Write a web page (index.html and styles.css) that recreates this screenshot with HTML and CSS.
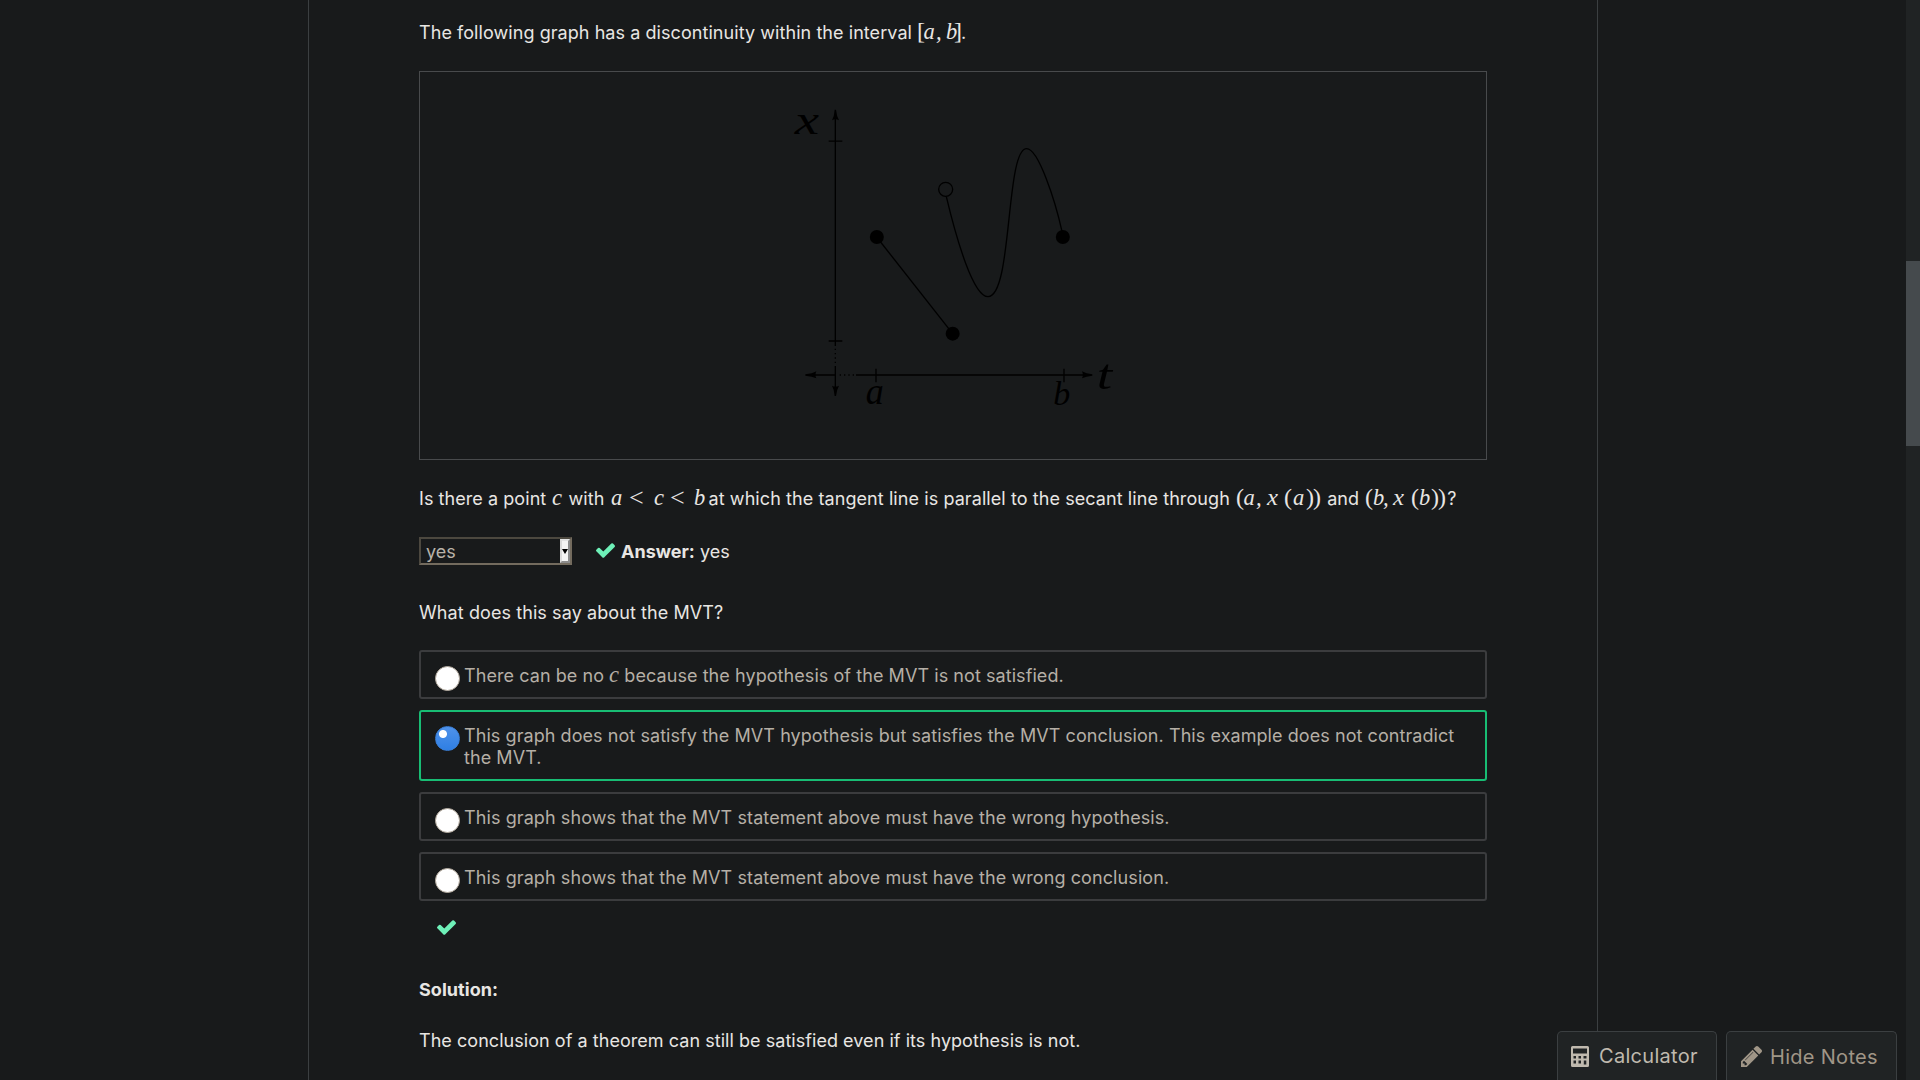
FILE: index.html
```html
<!DOCTYPE html>
<html lang="en">
<head>
<meta charset="utf-8">
<title>Mean Value Theorem</title>
<link rel="stylesheet" href="styles.css">
</head>
<body>
<div class="viewport">
  <main class="column">
    <p class="para intro">The following graph has a discontinuity within the interval <svg class="math" width="43" height="28"><text class="fence" x="-1" y="20">[</text><text x="5.500" y="20">a</text><text x="18" y="20">,</text><text x="28" y="20">b</text><text class="fence" x="36" y="20">]</text></svg>.</p>

    <figure class="figure">
      <svg class="graph" viewBox="0 0 1038 990">
        <g class="stroke">
          <path d="M166 80V768M166 828V900M146 153.500H187M146 753H187M95 855H166M228 855H920M288 836V877M852 836V877"/>
          <path class="dots" d="M166 776V828M179 855H228"/>
          <path d="M290 441L518 731"/>
          <path d="M499 320C530 450 580 620 624 620C698 620 676 176 740 176C775 176 825 330 846 424"/>
          <circle cx="497" cy="298" r="21"/>
        </g>
        <g>
          <circle cx="290.500" cy="441" r="21"/><circle cx="518" cy="731" r="21"/><circle cx="848.500" cy="441" r="21"/>
          <path d="M164 59H168Q170 78 177 91Q166 85 156 91Q163 78 164 59ZM164 918H168Q170 899 177 887Q166 892 156 887Q163 899 164 918ZM76 853V857Q97 859 109 865Q104 855 109 844Q97 851 76 853ZM937 853V857Q918 859 906 865Q911 855 906 844Q918 851 937 853Z"/>
        </g>
        <g class="labels">
          <text x="44" y="132" font-size="120" textLength="73" lengthAdjust="spacingAndGlyphs">x</text>
          <text x="257" y="942" font-size="114" textLength="54" lengthAdjust="spacingAndGlyphs">a</text>
          <text x="820" y="944" font-size="102" textLength="51" lengthAdjust="spacingAndGlyphs">b</text>
          <text x="950" y="897" font-size="126" textLength="46" lengthAdjust="spacingAndGlyphs">t</text>
        </g>
      </svg>
    </figure>

    <p class="para question">Is there a point <svg class="math" width="11" height="28"><text x="0" y="20">c</text></svg> with <svg class="math" width="94" height="28"><text x="0" y="20">a</text><text class="rel" x="18" y="21">&lt;</text><text x="43" y="20">c</text><text class="rel" x="59" y="21">&lt;</text><text x="83" y="20">b</text></svg><span class="after">at which the tangent line is parallel to the secant line through <svg class="math" width="86" height="28"><text class="fence" x="0" y="20">(</text><text x="7.500" y="20">a</text><text x="20" y="20">,</text><text class="ex" x="31" y="20" textLength="11" lengthAdjust="spacingAndGlyphs">x</text><text class="fence" x="48" y="20">(</text><text x="57" y="20">a</text><text class="fence" x="70" y="20">)</text><text class="fence" x="77" y="20">)</text></svg> and <svg class="math" width="82" height="28"><text class="fence" x="0" y="20">(</text><text x="8" y="20">b</text><text x="18" y="20">,</text><text class="ex" x="28" y="20" textLength="11" lengthAdjust="spacingAndGlyphs">x</text><text class="fence" x="46" y="20">(</text><text x="54" y="20">b</text><text class="fence" x="66" y="20">)</text><text class="fence" x="73" y="20">)</text></svg>?</span></p>

    <div class="answer-row">
      <div class="select"><span>yes</span><i class="select-btn"></i></div>
      <svg class="check" viewBox="0 0 1550 1188"><path d="M1550 232q0 40-28 68l-724 724-136 136q-28 28-68 28t-68-28l-136-136L28 662Q0 634 0 594t28-68l136-136q28-28 68-28t68 28l294 295L1250 28q28-28 68-28t68 28l136 136q28 28 28 68z"/></svg>
      <p class="answer"><b>Answer:</b> yes</p>
    </div>

    <p class="para prompt">What does this say about the MVT?</p>

    <div class="choices">
      <label class="choice"><i class="radio"></i><span>There can be no <svg class="math small" width="10" height="20"><text x="0" y="17">c</text></svg> because the hypothesis of the MVT is not satisfied.</span></label>
      <label class="choice correct"><i class="radio on"></i><span>This graph does not satisfy the MVT hypothesis but satisfies the MVT conclusion. This example does not contradict the MVT.</span></label>
      <label class="choice wide"><i class="radio"></i><span>This graph shows that the MVT statement above must have the wrong hypothesis.</span></label>
      <label class="choice wide"><i class="radio"></i><span>This graph shows that the MVT statement above must have the wrong conclusion.</span></label>
    </div>
    <svg class="check status" viewBox="0 0 1550 1188"><path d="M1550 232q0 40-28 68l-724 724-136 136q-28 28-68 28t-68-28l-136-136L28 662Q0 634 0 594t28-68l136-136q28-28 68-28t68 28l294 295L1250 28q28-28 68-28t68 28l136 136q28 28 28 68z"/></svg>

    <p class="para solution"><b>Solution:</b></p>
    <p class="para">The conclusion of a theorem can still be satisfied even if its hypothesis is not.</p>
  </main>

  <div class="scrollbar"><div class="thumb"></div></div>

  <div class="tools">
    <button class="tool calc"><svg width="18" height="21" viewBox="0 0 18 21"><path fill-rule="evenodd" d="M1.500 0H16.500Q18 0 18 1.500V19.500Q18 21 16.500 21H1.500Q0 21 0 19.500V1.500Q0 0 1.500 0ZM2 2.500V7.500H16V2.500ZM2.500 10V12.500H5V10ZM7.500 10V12.500H10V10ZM12.500 10V12.500H15.500V10ZM2.500 14.500V17.500H5V14.500ZM7.500 14.500V17.500H10V14.500ZM12.800 14.500V18.500H15.300V14.500Z"/></svg><span>Calculator</span></button>
    <button class="tool notes"><svg width="21" height="21" viewBox="0 0 1515 1515"><path fill-rule="evenodd" d="M363 1387l91-91-235-235-91 91v107h128v128zM886 459q0-22-22-22-10 0-17 7l-542 542q-7 7-7 17 0 22 22 22 10 0 17-7l542-542q7-7 7-17zM832 267l416 416-832 832H0v-416zM1515 363q0 53-37 90l-166 166-416-416 166-165q36-38 90-38 53 0 91 38l235 234q37 39 37 91z"/></svg><span>Hide Notes</span></button>
  </div>
</div>
</body>
</html>
```
FILE: styles.css
```css
* { box-sizing: border-box; }
body {
  margin: 0;
  background: #181a1b;
  color: #e8e6e3;
  font: 18px/28px Inter, "Noto Sans", sans-serif;
}
p, figure { margin: 0; }
.viewport {
  position: relative;
  width: 1920px;
  height: 1080px;
  overflow: hidden;
  display: flex;
}
.column {
  width: 1290px;
  margin-left: 308px;
  padding: 19px 110px 0;
  border-left: 1px solid #3b3f41;
  border-right: 1px solid #3b3f41;
}
.para { height: 28px; white-space: nowrap; letter-spacing: 0.045px; }
.intro { letter-spacing: 0.062px; }
.math {
  vertical-align: -8px;
  overflow: visible;
  fill: currentColor;
  font: italic 22.5px "Liberation Serif", serif;
  letter-spacing: 0;
}
.para .math { margin-left: 1px; }
.math .fence { font-style: normal; font-size: 24px; }
.math .rel { font-style: normal; font-size: 26px; }
.math.small { vertical-align: -3px; }
.figure {
  height: 389px;
  margin-top: 24px;
  padding-top: 18px;
  border: 1px solid #484a4c;
  display: flex;
  justify-content: center;
  align-items: flex-start;
}
.graph { width: 346px; height: 330px; }
.graph .stroke { fill: none; stroke: #000; stroke-width: 4; }
.graph .dots { stroke-dasharray: 4 9; }
.graph .labels { font-family: "Liberation Serif", serif; font-style: italic; }
.question { margin-top: 25px; letter-spacing: 0.06px; }
.after { margin-left: 4px; letter-spacing: 0.08px; }
.answer-row { display: flex; height: 28px; margin-top: 24px; }
.select {
  display: flex;
  justify-content: space-between;
  width: 153px;
  height: 28px;
  padding-left: 5px;
  border: 2px solid;
  border-color: #4c483f #736b5e #736b5e #4c483f;
  color: #b8b3a9;
  line-height: 25px;
}
.select-btn {
  width: 10px;
  border: 2px solid;
  border-color: #e3e3e3 #8c8c8c #8c8c8c #dadada;
  background: #f4f4f4;
  display: flex;
  align-items: center;
  justify-content: center;
}
.select-btn::before {
  content: "";
  border: 3px solid transparent;
  border-top: 5px solid #000;
  border-bottom: 0;
}
.check { width: 19px; height: 15px; fill: #6ef0b8; display: block; }
.answer-row .check { margin: 6px 6px 0 24px; }
.answer { padding-top: 1px; }
.prompt { margin-top: 34px; letter-spacing: 0.09px; }
.choices { display: grid; gap: 11px; margin-top: 23px; }
.choice {
  display: flex;
  gap: 4px;
  padding: 13px 20px 10px 14px;
  border: 2px solid #3b3c3e;
  border-radius: 3px;
  color: #b5afa6;
  line-height: 22px;
  letter-spacing: 0.067px;
}
.choice > span { min-height: 22px; }
.correct { border-color: #18bd74; }
.wide { letter-spacing: 0.09px; }
.radio {
  flex: none;
  width: 25px;
  height: 25px;
  margin: 1px 0 -4px;
  border: 1px solid #b0a79b;
  border-radius: 50%;
  background: #fff;
}
.radio.on {
  border-color: #3a7fd8;
  background: radial-gradient(circle at 7px 7px, #fff 3.500px, transparent 4.500px), linear-gradient(#4f92ea, #2f7fe4);
}
.status { margin: 19px 0 0 18px; }
.solution { margin-top: 41px; }
.solution + .para { margin-top: 23px; }
.scrollbar { width: 14px; margin-left: auto; padding-top: 261px; background: #202324; }
.thumb { height: 185px; background: #454a4d; }
.tools {
  position: absolute;
  right: 23px;
  bottom: 0;
  display: flex;
  gap: 9px;
}
.tool {
  display: flex;
  height: 49px;
  border: 1px solid #3b3f41;
  border-bottom: 0;
  border-radius: 5px 5px 0 0;
  background: #202324;
  font: 20px/24px Inter, sans-serif;
  white-space: nowrap;
  align-items: flex-start;
}
.tool svg { margin-top: 14px; flex: none; }
.calc { width: 160px; padding: 0 13px; color: #bfb9ae; fill: #bfb9ae; gap: 10px; letter-spacing: 0.3px; }
.calc span { margin-top: 12px; }
.notes { width: 171px; padding: 0 14px; color: #a09687; fill: #a09687; gap: 8px; letter-spacing: 0.3px; }
.notes span { margin-top: 13px; }
```
